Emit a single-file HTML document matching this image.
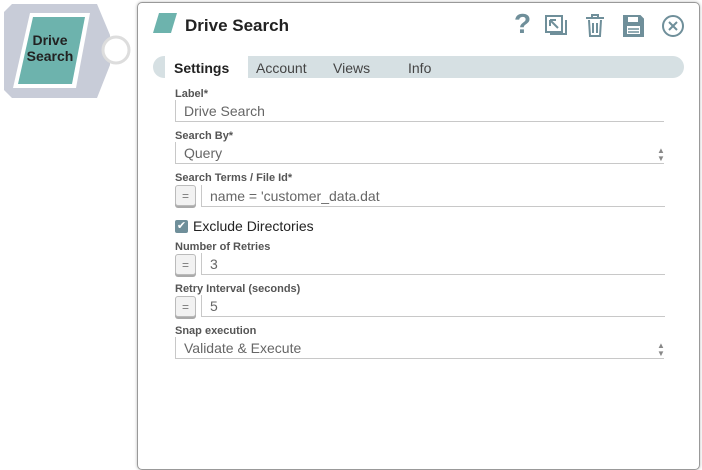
<!DOCTYPE html>
<html><head><style>
body{margin:0;width:702px;height:470px;background:#fff;font-family:"Liberation Sans",sans-serif;position:relative;overflow:hidden}
.a{position:absolute}
.lbl{position:absolute;left:175px;font-size:11px;font-weight:bold;color:#555}
.inp{position:absolute;left:175px;width:489px;height:22px;border-left:1px solid #c8c8c8;border-bottom:1px solid #c8c8c8;font-size:14px;color:#666;line-height:22px;padding-left:8px;box-sizing:border-box}
.eq{position:absolute;left:175px;width:21px;height:21px;border:1px solid #bbb;border-radius:3px;background:#f2f2f2;box-shadow:0 2px 0 #aaa;font-size:12px;color:#777;text-align:center;line-height:20px;box-sizing:border-box}
.arr{position:absolute;left:657px;font-size:8px;color:#888;line-height:8px}
</style></head><body>
<svg class="a" style="left:0;top:0" width="140" height="100">
<polygon points="12,4 97,4 110,35 110,65 97,98 12,98 4,90 4,12" fill="#c8ccd8"/>
<circle cx="116" cy="50" r="13" fill="#fff" stroke="#ddd" stroke-width="3"/>
<polygon points="30,13 90,13 76,88 13,88" fill="#fff"/>
<polygon points="33,17 85,17 72,84 18,84" fill="#6db3ad"/>
<text x="50" y="45" font-size="14" font-weight="bold" fill="#222" text-anchor="middle" font-family="Liberation Sans">Drive</text>
<text x="50" y="61" font-size="14" font-weight="bold" fill="#222" text-anchor="middle" font-family="Liberation Sans">Search</text>
</svg>
<div class="a" style="left:137px;top:2px;width:561px;height:466px;border:1px solid #999;border-radius:5px;box-shadow:0 0 3px #bbb"></div>
<svg class="a" style="left:153px;top:12px" width="26" height="22"><polygon points="6,1 24,1 18,21 0,21" fill="#6db3ad"/></svg>
<div class="a" style="left:185px;top:16px;font-size:17px;font-weight:bold;color:#222">Drive Search</div>
<div class="a" style="left:514px;top:8px;font-size:28px;font-weight:bold;color:#6f8f9a">?</div>
<svg class="a" style="left:544px;top:14px" width="145" height="26" fill="none" stroke="#6f8f9a" stroke-width="2">
<rect x="2" y="2" width="16" height="16"/><path d="M6 20h16V6"/><path d="M6 6l8 8M6 6h6M6 6v6"/>
<path d="M42 4h18M48 4V1h6v3M45 6l1 16h10l1-16M49 9v10M53 9v10"/>
<path d="M80 2h16l3 3v17H80z" fill="#6f8f9a"/><rect x="84" y="3" width="10" height="5" fill="#fff" stroke="none"/><rect x="83" y="12" width="13" height="8" fill="#fff" stroke="none"/><path d="M84 15h11M84 18h11" stroke-width="1.5"/>
<circle cx="129" cy="12" r="10"/><path d="M125 8l8 8M133 8l-8 8"/>
</svg>
<div class="a" style="left:153px;top:56px;width:531px;height:22px;background:#d6e0e3;border-radius:11px"></div>
<div class="a" style="left:165px;top:56px;width:83px;height:22px;background:#fff"></div>
<div class="a" style="left:174px;top:60px;font-size:14px;font-weight:bold;color:#222">Settings</div>
<div class="a" style="left:256px;top:60px;font-size:14px;color:#444">Account</div>
<div class="a" style="left:333px;top:60px;font-size:14px;color:#444">Views</div>
<div class="a" style="left:408px;top:60px;font-size:14px;color:#444">Info</div>
<div class="lbl" style="top:88px">Label*</div>
<div class="inp" style="top:100px">Drive Search</div>
<div class="lbl" style="top:130px">Search By*</div>
<div class="inp" style="top:142px">Query</div>
<div class="arr" style="top:147px">▲<br>▼</div>
<div class="lbl" style="top:172px">Search Terms / File Id*</div>
<div class="eq" style="top:185px">=</div>
<div class="inp" style="top:185px;left:201px;width:464px">name = 'customer_data.dat</div>
<div class="a" style="left:175px;top:220px;width:13px;height:13px;background:#6f8f9a;border-radius:2px;color:#fff;font-size:11px;line-height:13px;text-align:center">✔</div>
<div class="a" style="left:193px;top:218px;font-size:14px;color:#222">Exclude Directories</div>
<div class="lbl" style="top:241px">Number of Retries</div>
<div class="eq" style="top:254px">=</div>
<div class="inp" style="top:253px;left:201px;width:464px">3</div>
<div class="lbl" style="top:283px">Retry Interval (seconds)</div>
<div class="eq" style="top:296px">=</div>
<div class="inp" style="top:295px;left:201px;width:464px">5</div>
<div class="lbl" style="top:325px">Snap execution</div>
<div class="inp" style="top:337px">Validate &amp; Execute</div>
<div class="arr" style="top:342px">▲<br>▼</div>
</body></html>
